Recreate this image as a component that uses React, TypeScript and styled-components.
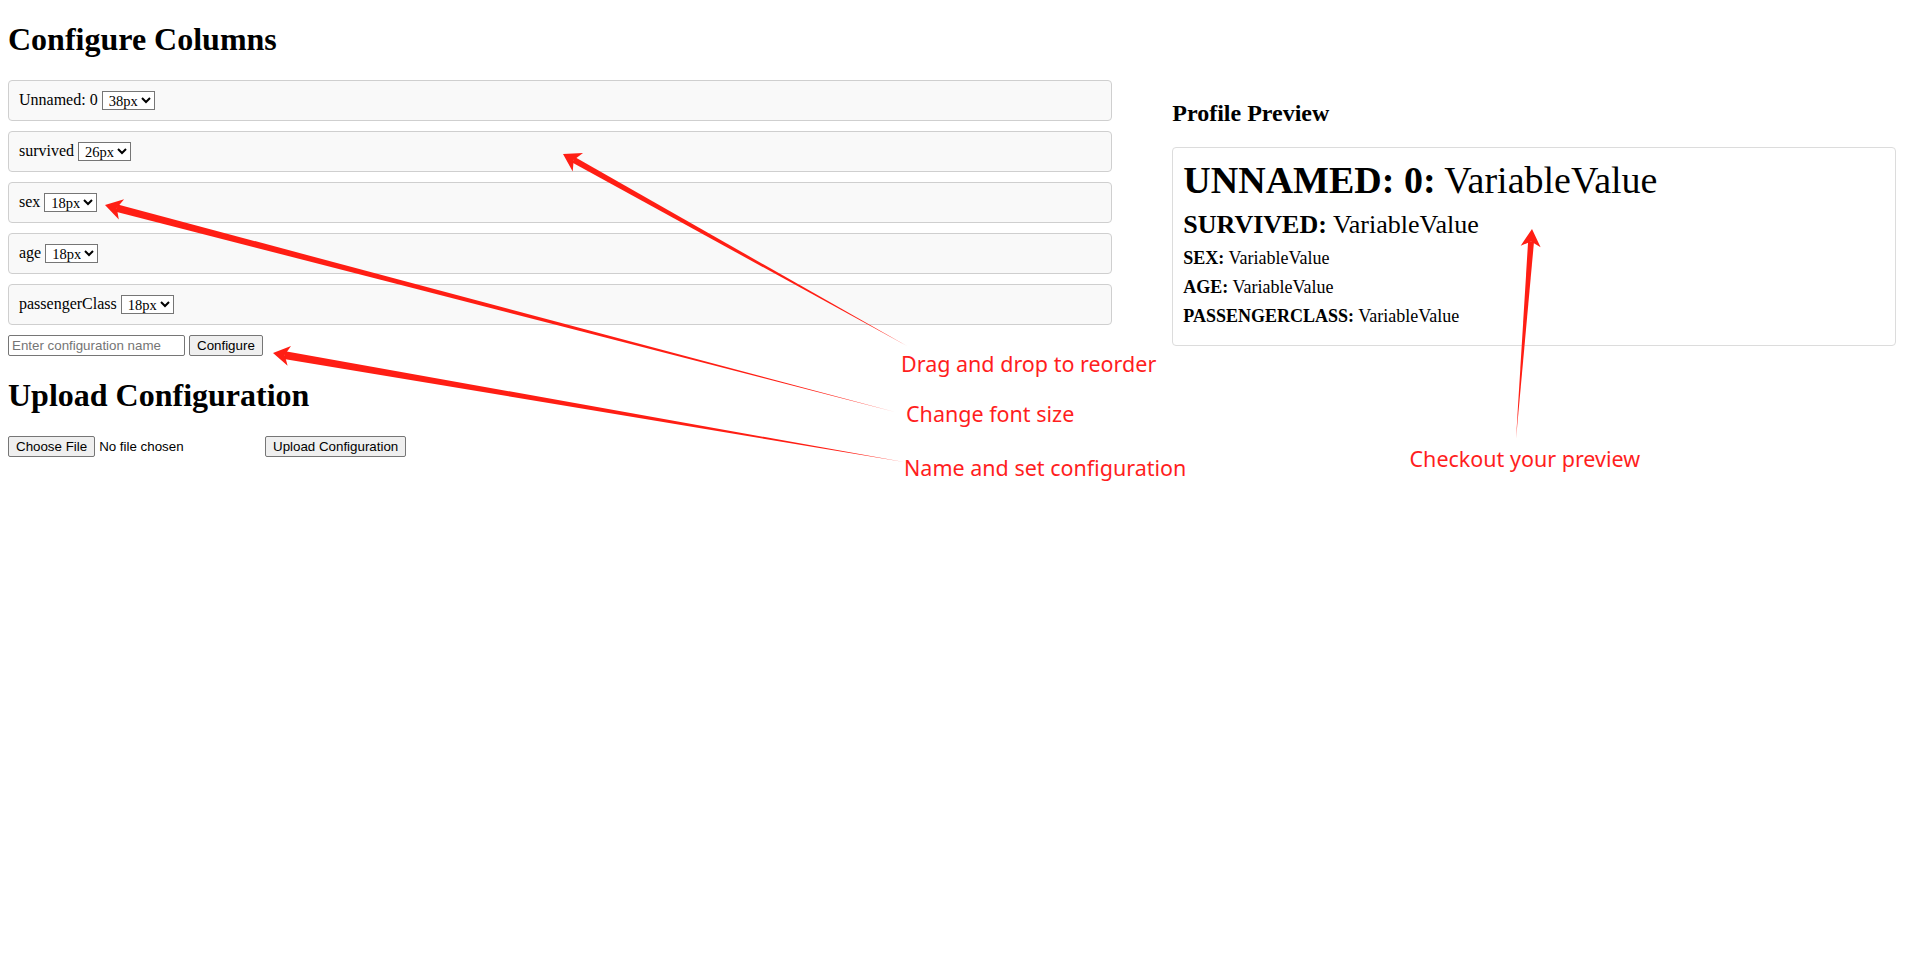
import React from "react";
import styled, { createGlobalStyle } from "styled-components";

const GlobalStyle = createGlobalStyle`
  html, body { background: #fff; }
  body {
    margin: 0;
    padding: 0 8px 8px;
    font-family: "Liberation Serif", "Times New Roman", serif;
    font-size: 16px;
    color: #000;
  }
`;

const Title = styled.h1`
  font-size: 32px;
  font-weight: bold;
  margin: 21.44px 0;
`;

const Main = styled.div`
  display: flex;
  align-items: flex-start;
  gap: 60px;
`;

const LeftCol = styled.div`
  flex: 0 0 58%;
`;

const RightCol = styled.div`
  flex: 0 0 38%;
`;

const ColumnRow = styled.div`
  display: flex;
  align-items: center;
  gap: 4px;
  box-sizing: border-box;
  height: 41px;
  padding: 10px;
  margin-bottom: 10px;
  border: 1px solid #cfcfcf;
  border-radius: 4px;
  background: #f9f9f9;
  font-size: 16px;
`;

const SizeSelect = styled.select`
  font-family: "Liberation Serif", "Times New Roman", serif;
  font-size: 14.5px;
  height: 19px;
  padding: 0 0 0 2px;
  color: #000;
  background: #fff;
  border: 1px solid #767676;
  border-radius: 0;
`;

const FormRow = styled.div`
  display: flex;
  align-items: center;
  gap: 4px;
`;

const NameInput = styled.input`
  box-sizing: border-box;
  width: 177px;
  height: 21px;
  padding: 1px 3px;
  font-family: "Liberation Sans", Arial, sans-serif;
  font-size: 13.333px;
  border: 1px solid #767676;
  border-radius: 2px;
  &::placeholder {
    color: #757575;
  }
`;

const PlainButton = styled.button`
  box-sizing: border-box;
  height: 21px;
  padding: 1px 7px;
  font-family: "Liberation Sans", Arial, sans-serif;
  font-size: 13.333px;
  color: #000;
  background: #efefef;
  border: 1px solid #767676;
  border-radius: 2px;
`;

const UploadRow = styled.div`
  display: flex;
  align-items: center;
  gap: 4px;
`;

const FileInput = styled.input`
  width: 253px;
  font-family: "Liberation Sans", Arial, sans-serif;
  font-size: 13.333px;
  color: #000;
  &::file-selector-button {
    box-sizing: border-box;
    height: 21px;
    padding: 1px 7px;
    margin-right: 4px;
    font-family: "Liberation Sans", Arial, sans-serif;
    font-size: 13.333px;
    color: #000;
    background: #efefef;
    border: 1px solid #767676;
    border-radius: 2px;
  }
`;

const PreviewTitle = styled.h2`
  font-size: 24px;
  font-weight: bold;
  margin: 19.92px 0;
`;

const PreviewBox = styled.div`
  border: 1px solid #dcdcdc;
  border-radius: 4px;
  padding: 10px;
  background: #fff;
`;

const PreviewLine = styled.div<{ $size: number }>`
  font-size: ${(p) => p.$size}px;
  margin-bottom: 8px;
`;

const PreviewLabel = styled.strong`
  text-transform: uppercase;
`;

const Overlay = styled.svg`
  position: absolute;
  left: 0;
  top: 0;
  width: 1920px;
  height: 953px;
  pointer-events: none;
`;

const Note = styled.span<{ $x: number; $y: number }>`
  position: absolute;
  left: ${(p) => p.$x}px;
  top: ${(p) => p.$y}px;
  font-family: "Noto Sans", "Open Sans", sans-serif;
  font-size: 21.5px;
  line-height: 1;
  color: #ff1e1e;
  white-space: nowrap;
  pointer-events: none;
`;

type Pt = [number, number];

function arrowShapes(tail: Pt, tip: Pt, headLen: number, headHalf: number, shaftW: number) {
  const dx = tip[0] - tail[0];
  const dy = tip[1] - tail[1];
  const len = Math.hypot(dx, dy);
  const ux = dx / len;
  const uy = dy / len;
  const nx = -uy;
  const ny = ux;
  const bx = tip[0] - ux * headLen;
  const by = tip[1] - uy * headLen;
  const kx = tip[0] - ux * headLen * 0.72;
  const ky = tip[1] - uy * headLen * 0.72;
  const f = (x: number, y: number) => `${x.toFixed(1)},${y.toFixed(1)}`;
  const head = [
    f(tip[0], tip[1]),
    f(bx + nx * headHalf, by + ny * headHalf),
    f(kx, ky),
    f(bx - nx * headHalf, by - ny * headHalf),
  ].join(" ");
  const shaft = [
    f(tail[0], tail[1]),
    f(kx + nx * (shaftW / 2), ky + ny * (shaftW / 2)),
    f(kx - nx * (shaftW / 2), ky - ny * (shaftW / 2)),
  ].join(" ");
  return { head, shaft };
}

const arrows: { tail: Pt; tip: Pt; hl: number; hh: number; w: number }[] = [
  { tail: [907, 346], tip: [563, 154], hl: 17, hh: 10.5, w: 6 },
  { tail: [895, 412], tip: [105, 205], hl: 17, hh: 10.5, w: 7.5 },
  { tail: [904, 462], tip: [273, 353], hl: 16.5, hh: 10, w: 7.8 },
  { tail: [1516, 439], tip: [1532, 229], hl: 17.5, hh: 10, w: 6 },
];

const notes: { x: number; y: number; text: string }[] = [
  { x: 901, y: 352.5, text: "Drag and drop to reorder" },
  { x: 906, y: 402.5, text: "Change font size" },
  { x: 904, y: 457, text: "Name and set configuration" },
  { x: 1409.5, y: 447.5, text: "Checkout your preview" },
];

const columns = [
  { name: "Unnamed: 0", size: 38 },
  { name: "survived", size: 26 },
  { name: "sex", size: 18 },
  { name: "age", size: 18 },
  { name: "passengerClass", size: 18 },
];

const sizeOptions = [12, 14, 16, 18, 20, 22, 24, 26, 28, 30, 32, 34, 36, 38, 40];

export default function App() {
  return (
    <>
      <GlobalStyle />
      <Title>Configure Columns</Title>
      <Main>
        <LeftCol>
          {columns.map((c) => (
            <ColumnRow key={c.name}>
              <span>{c.name}</span>
              <SizeSelect defaultValue={String(c.size)}>
                {sizeOptions.map((s) => (
                  <option key={s} value={String(s)}>
                    {s}px
                  </option>
                ))}
              </SizeSelect>
            </ColumnRow>
          ))}
          <FormRow>
            <NameInput type="text" placeholder="Enter configuration name" />
            <PlainButton>Configure</PlainButton>
          </FormRow>
        </LeftCol>
        <RightCol>
          <PreviewTitle>Profile Preview</PreviewTitle>
          <PreviewBox>
            {columns.map((c) => (
              <PreviewLine key={c.name} $size={c.size}>
                <PreviewLabel>{c.name}:</PreviewLabel> VariableValue
              </PreviewLine>
            ))}
          </PreviewBox>
        </RightCol>
      </Main>
      <Title>Upload Configuration</Title>
      <UploadRow>
        <FileInput type="file" />
        <PlainButton>Upload Configuration</PlainButton>
      </UploadRow>

      <Overlay viewBox="0 0 1920 953">
        {arrows.map((a, i) => {
          const s = arrowShapes(a.tail, a.tip, a.hl, a.hh, a.w);
          return (
            <g key={i} fill="#ff1e14">
              <polygon points={s.shaft} />
              <polygon points={s.head} />
            </g>
          );
        })}
      </Overlay>
      {notes.map((n) => (
        <Note key={n.text} $x={n.x} $y={n.y}>
          {n.text}
        </Note>
      ))}
    </>
  );
}
